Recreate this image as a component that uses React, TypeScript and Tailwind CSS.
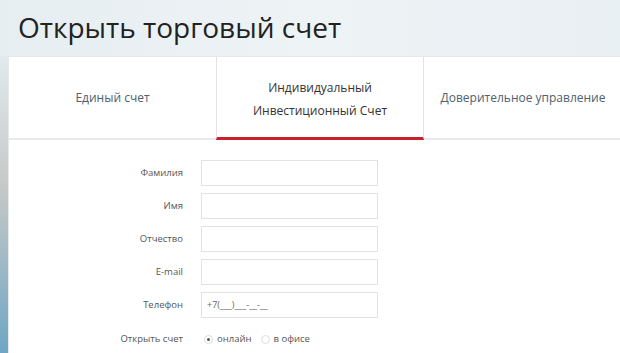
import React from 'react';

const fields = ['Фамилия', 'Имя', 'Отчество', 'E-mail', 'Телефон'];

export default function App() {
    return (
        <div className="w-[620px] h-[353px] overflow-hidden bg-gradient-to-r from-[#e6eef2] via-[#eef3f5] to-[#e9f0f3]" style={{ fontFamily: '"Open Sans", sans-serif' }}>
            <h1 className="h-[56px] pl-[18px] pt-[3px] text-[28px] font-normal text-[#222] leading-[48px]">
                Открыть торговый счет
            </h1>

            <div className="flex h-[297px]">
                {/* sky strip on the left */}
                <div className="w-[8px] bg-gradient-to-b from-[#e2eaee] via-[#c4c8c6] via-45% to-[#6ea6c4]"></div>

                <div className="flex-1 bg-white border-l border-t border-[#e6e9ea]">
                    {/* tabs */}
                    <div className="flex h-[83px]">
                        <div className="w-[207px] flex items-center justify-center border-b-2 border-[#e8e8e8] text-[12px] text-[#4d6170]">
                            Единый счет
                        </div>
                        <div className="w-[208px] flex flex-col items-center justify-center border-x border-[#e3e3e3] border-b-[3px] border-b-[#c8202f] text-[12px] leading-[23px] text-[#333] text-center pt-[3px]">
                            <span>Индивидуальный</span>
                            <span>Инвестиционный Счет</span>
                        </div>
                        <div className="flex-1 flex items-center justify-center border-b-2 border-[#e8e8e8] text-[12px] text-[#4d6170] pl-[2px]">
                            Доверительное управление
                        </div>
                    </div>

                    {/* form */}
                    <div className="pt-[20px] flex flex-col gap-[7px]">
                        {fields.map(f => (
                            <div key={f} className="flex items-center h-[26px]">
                                <div className="w-[174px] text-right text-[9.5px] text-[#555]">{f}</div>
                                <div className="ml-[18px] w-[177px] h-[26px] border border-[#e2e2e2] flex items-center px-[5px] text-[9px] text-[#666]">
                                    {f === 'Телефон' ? '+7(___)___-__-__' : ''}
                                </div>
                            </div>
                        ))}
                        <div className="flex items-center h-[26px] mt-[1px]">
                            <div className="w-[174px] text-right text-[9.5px] text-[#555]">Открыть счет</div>
                            <div className="ml-[21px] flex items-center text-[9.5px] text-[#555]">
                                <span className="w-[9px] h-[9px] rounded-full border border-[#ddd] flex items-center justify-center">
                                    <span className="w-[3px] h-[3px] rounded-full bg-[#555]"></span>
                                </span>
                                <span className="ml-[4px]">онлайн</span>
                                <span className="ml-[9px] w-[9px] h-[9px] rounded-full border border-[#ddd]"></span>
                                <span className="ml-[4px]">в офисе</span>
                            </div>
                        </div>
                    </div>
                </div>
            </div>
        </div>
    );
}
